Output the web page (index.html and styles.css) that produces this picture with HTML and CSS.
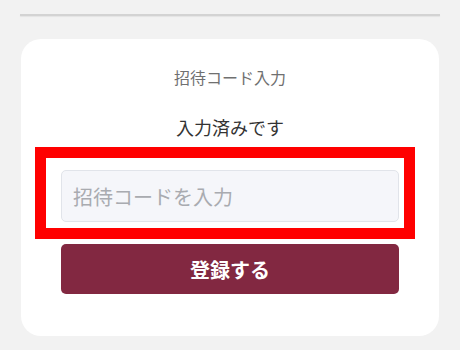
FILE: index.html
```html
<!DOCTYPE html>
<html lang="ja">
<head>
    <meta charset="UTF-8">
    <meta name="viewport" content="width=device-width, initial-scale=1.0">
    <title>招待コード入力</title>
    <link rel="stylesheet" href="styles.css">
</head>
<body>
    <div class="linha"></div>

    <form class="cartao">
        <h1 class="titulo">招待コード入力</h1>
        <p class="status">入力済みです</p>
        <div class="campo">
            <input class="valor" type="text" id="codigo" autocomplete="off" placeholder="招待コードを入力">
            <span class="destaque"></span>
        </div>
        <button class="botao" type="button">登録する</button>
    </form>
</body>
</html>
```

FILE: styles.css
```css
body {
    margin: 0;
    padding: 0 20px;
    background-color: #f2f2f2;
    font-family: "Noto Sans CJK JP", "Noto Sans", sans-serif;
}

.linha {
    margin-top: 14px;
    height: 2px;
    background-color: #d3d3d3;
    box-shadow: 0 1px 1px #e4e4e4;
}

.cartao {
    margin: 23px 1px 0 1px;
    background-color: #ffffff;
    border-radius: 20px;
    padding: 26px 40px 42px 40px;
    display: flex;
    flex-direction: column;
    align-items: center;
}

.titulo {
    margin: 0;
    font-size: 16px;
    line-height: 24px;
    font-weight: normal;
    color: #707070;
}

.status {
    margin: 25px 0 0 0;
    font-size: 18px;
    line-height: 26px;
    color: #333333;
}

.campo {
    position: relative;
    width: 100%;
    margin-top: 30px;
}

.valor {
    display: block;
    box-sizing: border-box;
    width: 100%;
    height: 52px;
    padding: 0 11px;
    background-color: #f5f6fa;
    border: 1px solid #e1e4ea;
    border-radius: 5px;
    font-family: inherit;
    font-size: 20px;
    color: #333333;
    outline: none;
}

.valor::placeholder {
    color: #a9abb0;
}

/* marcação vermelha sobre o campo */
.destaque {
    position: absolute;
    top: -23px;
    left: -26px;
    right: -16px;
    bottom: -17px;
    border: 11px solid #ff0000;
    pointer-events: none;
}

.botao {
    margin-top: 22px;
    width: 100%;
    height: 50px;
    border: none;
    border-radius: 5px;
    background-color: #822841;
    color: #ffffff;
    font-family: inherit;
    font-size: 20px;
    font-weight: bold;
}
```
